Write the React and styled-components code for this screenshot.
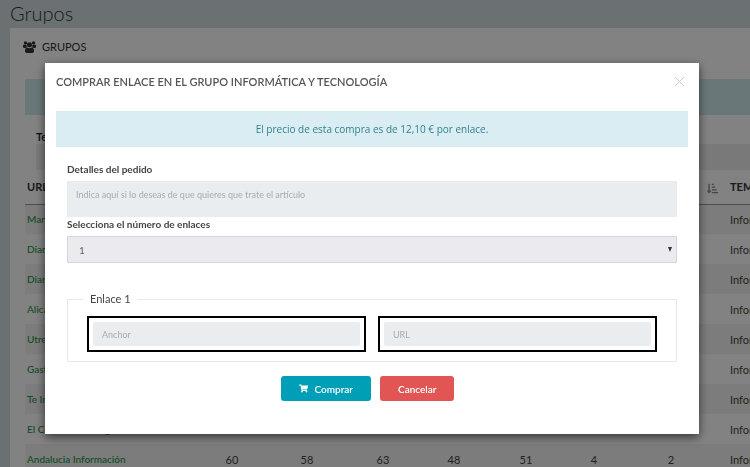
import React, { useState } from 'react'
import styled, { createGlobalStyle } from 'styled-components'
import { FaShoppingCart, FaSortAmountDownAlt } from 'react-icons/fa'

const rows = [
  { url: 'Marca', values: [55, 52, 60, 41, 50, 3, 1] },
  { url: 'Diario', values: [48, 50, 57, 44, 49, 4, 2] },
  { url: 'Diario', values: [51, 49, 55, 42, 47, 3, 2] },
  { url: 'Alicante', values: [47, 51, 58, 40, 46, 4, 2] },
  { url: 'Utrera', values: [45, 44, 52, 39, 45, 3, 1] },
  { url: 'Gastro', values: [50, 47, 54, 43, 48, 4, 2] },
  { url: 'Te Interesa', values: [53, 55, 61, 46, 50, 4, 2] },
  { url: 'El Confidencial Digital', values: [58, 57, 62, 47, 51, 4, 2] },
  { url: 'Andalucia Información', values: [60, 58, 63, 48, 51, 4, 2] },
]

const columnWidths = [167, 80, 70, 82, 60, 84, 52, 102]

const UsersIcon = () => (
  <svg width="13" height="12" viewBox="0 0 26 24" fill="currentColor">
    <circle cx="5" cy="4" r="3.4" />
    <circle cx="21" cy="4" r="3.4" />
    <circle cx="13" cy="7.5" r="5" />
    <path d="M0 12V10Q0 7 2 7Q4 8.500 7 8Q7 10.500 8.500 12.500Q6 12.500 5 14H3Q0 14 0 12Z" />
    <path d="M26 12V10Q26 7 24 7Q22 8.500 19 8Q19 10.500 17.500 12.500Q20 12.500 21 14H23Q26 14 26 12Z" />
    <path d="M4 20Q4 13 8.500 13Q13 16 17.500 13Q22 13 22 20Q22 24 18.500 24H7.500Q4 24 4 20Z" />
  </svg>
)

const App = () => {
  const [isOpen, setIsOpen] = useState(true)
  const [count, setCount] = useState('1')

  const handleClose = () => setIsOpen(false)

  return (
    <>
      <GlobalStyle />
      <Page>
        <PageTitle>Grupos</PageTitle>
        <Panel>
          <PanelHeader>
            <UsersIcon />
            <span>GRUPOS</span>
          </PanelHeader>
          <PanelNotice />
          <Filter>
            <FilterLabel htmlFor="theme">Temática</FilterLabel>
            <FilterInput id="theme" type="text" />
          </Filter>
          <Table>
            <colgroup>
              {columnWidths.map((width, i) => (
                <Col key={i} $width={width} />
              ))}
              <col />
            </colgroup>
            <thead>
              <tr>
                <HeadCell>URL</HeadCell>
                {['DA', 'PA', 'TF', 'CF', 'DR', 'TR', ''].map((name, i) => (
                  <HeadCell key={i} $sortable>
                    {name}
                    <FaSortAmountDownAlt size={11} />
                  </HeadCell>
                ))}
                <HeadCell>TEMÁTICA</HeadCell>
              </tr>
            </thead>
            <tbody>
              {rows.map((row, index) => (
                <Row key={index}>
                  <Cell><SiteLink href="#">{row.url}</SiteLink></Cell>
                  {row.values.map((value, i) => (
                    <Cell key={i} $center>{value}</Cell>
                  ))}
                  <Cell>Informática</Cell>
                </Row>
              ))}
            </tbody>
          </Table>
        </Panel>
      </Page>

      {isOpen && (
        <Backdrop>
          <Modal role="dialog" aria-modal="true" aria-labelledby="modal-title">
            <ModalHeader>
              <ModalTitle id="modal-title">COMPRAR ENLACE EN EL GRUPO INFORMÁTICA Y TECNOLOGÍA</ModalTitle>
              <CloseButton type="button" aria-label="Cerrar" onClick={handleClose}>
                <svg width="9" height="9" viewBox="0 0 9 9" stroke="currentColor">
                  <path d="M0 0L9 9M9 0L0 9" />
                </svg>
              </CloseButton>
            </ModalHeader>
            <Notice>El precio de esta compra es de 12,10 € por enlace.</Notice>
            <Form onSubmit={(e) => e.preventDefault()}>
              <Label htmlFor="details">Detalles del pedido</Label>
              <TextArea id="details" placeholder="Indica aquí si lo deseas de que quieres que trate el artículo" />
              <Label htmlFor="count">Selecciona el número de enlaces</Label>
              <SelectWrapper>
                <Select id="count" value={count} onChange={(e) => setCount(e.target.value)}>
                  <option value="1">1</option>
                  <option value="2">2</option>
                  <option value="3">3</option>
                </Select>
                <svg width="4" height="5" viewBox="0 0 4 5" fill="#333">
                  <path d="M0 0H4L2 5Z" />
                </svg>
              </SelectWrapper>
              <LinkGroup>
                <Legend>Enlace 1</Legend>
                <InputFrame>
                  <Input type="text" placeholder="Anchor" aria-label="Anchor" />
                </InputFrame>
                <InputFrame>
                  <Input type="text" placeholder="URL" aria-label="URL" />
                </InputFrame>
              </LinkGroup>
              <Actions>
                <Button type="submit" $color="#009fb8">
                  <FaShoppingCart size={9} />
                  Comprar
                </Button>
                <Button type="button" $color="#e25555" onClick={handleClose}>Cancelar</Button>
              </Actions>
            </Form>
          </Modal>
        </Backdrop>
      )}
    </>
  )
}

export default App

const GlobalStyle = createGlobalStyle`
* {
  box-sizing: border-box;
}
body {
  margin: 0;
  overflow: hidden;
  background: #d2dde1;
  font-family: Lato, "Liberation Sans", sans-serif;
  font-size: 10px;
  color: #444;
}
input, textarea, select, button {
  font-family: inherit;
}
`;

const Page = styled.main`
height: 100vh;
overflow: hidden;
padding-left: 10px;
`;

const PageTitle = styled.h1`
margin: 0;
height: 28px;
font-size: 20px;
line-height: 26px;
font-weight: 300;
color: #333;
`;

const Panel = styled.section`
padding-left: 15px;
background: #fff;
`;

const PanelHeader = styled.header`
display: flex;
align-items: center;
gap: 6px;
height: 51px;
padding-bottom: 14px;
margin-left: -2px;
font-size: 11px;
color: #333;
`;

const PanelNotice = styled.div`
height: 36px;
background: #d0eaec;
`;

const Filter = styled.div`
display: flex;
flex-direction: column;
padding: 14px 0 0 11px;
`;

const FilterLabel = styled.label`
line-height: 15px;
font-size: 11px;
font-weight: 600;
color: #222;
`;

const FilterInput = styled.input`
width: 100%;
height: 26px;
border: none;
background: #eee;
`;

const Table = styled.table`
width: 100%;
table-layout: fixed;
border-collapse: collapse;
white-space: nowrap;
`;

const Col = styled.col`
width: ${({ $width }) => $width}px;
`;

const HeadCell = styled.th`
height: 34px;
padding: ${({ $sortable }) => ($sortable ? '0 4px' : '0 0 0 8px')};
border-bottom: 1px solid #999;
text-align: ${({ $sortable }) => ($sortable ? 'right' : 'left')};
overflow: hidden;
font-size: 11px;
color: #333;

&:first-child {
  padding-left: 2px;
}
svg {
  margin-left: 4px;
  vertical-align: middle;
  color: #888;
}
`;

const Row = styled.tr`
&:nth-child(odd) {
  background: #f3f3f3;
}
`;

const Cell = styled.td`
height: 30px;
padding: ${({ $center }) => ($center ? 0 : '0 0 0 8px')};
text-align: ${({ $center }) => ($center ? 'center' : 'left')};
font-size: 11px;
overflow: hidden;

&:first-child {
  padding-left: 2px;
  font-size: 10px;
}
`;

const SiteLink = styled.a`
font-weight: 500;
color: #1f9646;
text-decoration: none;
`;

const Backdrop = styled.div`
position: fixed;
inset: 0;
padding: 63px 51px 33px 45px;
background: rgba(0, 0, 0, 0.49);
`;

const Modal = styled.div`
padding: 0 11px 33px;
background: #fff;
box-shadow: 0 3px 9px rgba(0, 0, 0, 0.6);
`;

const ModalHeader = styled.header`
display: flex;
align-items: center;
justify-content: space-between;
height: 48px;
padding-bottom: 11px;
`;

const ModalTitle = styled.h2`
margin: 0;
font-size: 11px;
font-weight: 600;
color: #555;
`;

const CloseButton = styled.button`
display: flex;
padding: 4px;
border: none;
background: none;
color: #ccc;
cursor: pointer;
`;

const Notice = styled.p`
margin: 0;
height: 36px;
line-height: 36px;
background: #d9edf3;
text-align: center;
font-family: "Open Sans", sans-serif;
font-size: 10px;
color: #31808f;
`;

const Form = styled.form`
display: flex;
flex-direction: column;
padding: 15px 11px 0;
`;

const Label = styled.label`
height: 19px;
line-height: 14px;
font-weight: bold;
color: #444;
`;

const TextArea = styled.textarea`
height: 36px;
padding: 8px 9px;
border: none;
background: #e9edf0;
font-size: 9px;
line-height: 12px;
resize: none;

&::placeholder {
  color: #aaa;
}
`;

const SelectWrapper = styled.div`
display: grid;
align-items: center;

svg {
  grid-area: 1 / 1;
  justify-self: end;
  margin-right: 5px;
  pointer-events: none;
}
`;

const Select = styled.select`
grid-area: 1 / 1;
height: 27px;
padding: 0 11px;
border: 1px solid #d3d6da;
border-radius: 1px;
background: #eaeaef;
font-size: 10px;
color: #666;
appearance: none;
`;

const LinkGroup = styled.fieldset`
display: grid;
grid-template-columns: 1fr 1fr;
gap: 12px;
margin: 29px 0 0;
padding: 10px 19px 9px;
border: 1px solid #e8e8e8;
`;

const Legend = styled.legend`
margin-left: -4px;
padding: 0 7px;
font-size: 11px;
line-height: 14px;
`;

const InputFrame = styled.div`
padding: 4px;
border: 2px solid #000;
`;

const Input = styled.input`
display: block;
width: 100%;
height: 24px;
padding: 0 9px;
border: none;
border-radius: 2px;
background: #e9edf0;
font-size: 9px;

&::placeholder {
  color: #aaa;
}
`;

const Actions = styled.div`
display: flex;
justify-content: center;
margin-top: 14px;
`;

const Button = styled.button`
display: flex;
align-items: center;
gap: 7px;
height: 25px;
margin-right: 9px;
padding: 0 18px;
border: none;
border-radius: 3px;
background: ${({ $color }) => $color};
font-size: 10px;
font-weight: 600;
color: #fff;
cursor: pointer;
`;
